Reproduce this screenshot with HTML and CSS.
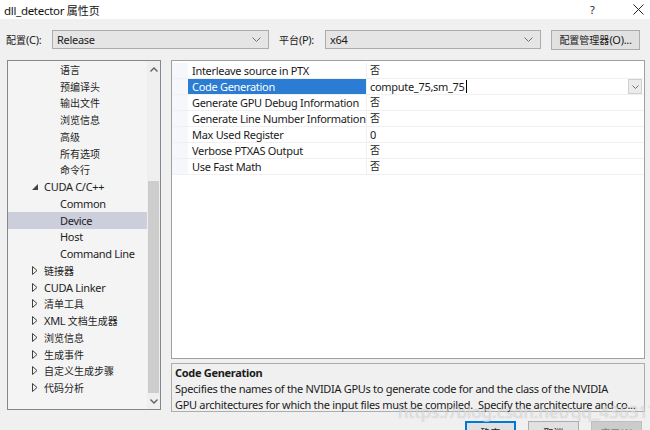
FILE: index.html
```html
<!DOCTYPE html>
<html>
<head>
<meta charset="utf-8">
<link rel="stylesheet" href="styles.css">
</head>
<body>
<div class="window">
  <div class="titlebar">
    <span class="title">dll_detector <span class="zh">属性页</span></span>
    <span class="help">?</span>
    <span class="close"><svg width="11" height="11" viewBox="0 0 11 11"><path d="M0.5 0.5 L10.5 10.5 M10.5 0.5 L0.5 10.5" stroke="#222" stroke-width="1"/></svg></span>
  </div>
  <div class="toolbar">
    <span class="lbl"><span class="zh">配置</span>(C):</span>
    <div class="combo cfg"><span>Release</span><svg class="chev" width="9" height="5" viewBox="0 0 9 5"><path d="M0.5 0.5 L4.5 4.5 L8.5 0.5" fill="none" stroke="#707070"/></svg></div>
    <span class="lbl plat-lbl"><span class="zh">平台</span>(P):</span>
    <div class="combo plat"><span>x64</span><svg class="chev" width="9" height="5" viewBox="0 0 9 5"><path d="M0.5 0.5 L4.5 4.5 L8.5 0.5" fill="none" stroke="#707070"/></svg></div>
    <div class="btn mgr"><span class="zh">配置管理器</span>(O)...</div>
  </div>
  <div class="main">
    <div class="tree">
      <ul class="items">
        <li class="l2 zh">语言</li>
        <li class="l2 zh">预编译头</li>
        <li class="l2 zh">输出文件</li>
        <li class="l2 zh">浏览信息</li>
        <li class="l2 zh">高级</li>
        <li class="l2 zh">所有选项</li>
        <li class="l2 zh">命令行</li>
        <li class="l1"><svg class="tri" width="6" height="6" viewBox="0 0 6 6"><path d="M6 0 L6 6 L0 6 Z" fill="#404040"/></svg>CUDA C/C++</li>
        <li class="l2">Common</li>
        <li class="l2 sel">Device</li>
        <li class="l2">Host</li>
        <li class="l2">Command Line</li>
        <li class="l1 zh"><svg class="tri" width="6" height="9" viewBox="0 0 6 9"><path d="M0.5 0.5 L5 4.5 L0.5 8.5 Z" fill="none" stroke="#404040"/></svg>链接器</li>
        <li class="l1"><svg class="tri" width="6" height="9" viewBox="0 0 6 9"><path d="M0.5 0.5 L5 4.5 L0.5 8.5 Z" fill="none" stroke="#404040"/></svg>CUDA Linker</li>
        <li class="l1 zh"><svg class="tri" width="6" height="9" viewBox="0 0 6 9"><path d="M0.5 0.5 L5 4.5 L0.5 8.5 Z" fill="none" stroke="#404040"/></svg>清单工具</li>
        <li class="l1"><svg class="tri" width="6" height="9" viewBox="0 0 6 9"><path d="M0.5 0.5 L5 4.5 L0.5 8.5 Z" fill="none" stroke="#404040"/></svg>XML&nbsp;<span class="zh">文档生成器</span></li>
        <li class="l1 zh"><svg class="tri" width="6" height="9" viewBox="0 0 6 9"><path d="M0.5 0.5 L5 4.5 L0.5 8.5 Z" fill="none" stroke="#404040"/></svg>浏览信息</li>
        <li class="l1 zh"><svg class="tri" width="6" height="9" viewBox="0 0 6 9"><path d="M0.5 0.5 L5 4.5 L0.5 8.5 Z" fill="none" stroke="#404040"/></svg>生成事件</li>
        <li class="l1 zh"><svg class="tri" width="6" height="9" viewBox="0 0 6 9"><path d="M0.5 0.5 L5 4.5 L0.5 8.5 Z" fill="none" stroke="#404040"/></svg>自定义生成步骤</li>
        <li class="l1 zh"><svg class="tri" width="6" height="9" viewBox="0 0 6 9"><path d="M0.5 0.5 L5 4.5 L0.5 8.5 Z" fill="none" stroke="#404040"/></svg>代码分析</li>
      </ul>
      <div class="vscroll">
        <div class="sarrow"><svg width="8" height="5" viewBox="0 0 8 5"><path d="M0.5 4.5 L4 1 L7.5 4.5" fill="none" stroke="#606060" stroke-width="1.4"/></svg></div>
        <div class="track"><div class="thumb"></div></div>
        <div class="sarrow"><svg width="8" height="5" viewBox="0 0 8 5"><path d="M0.5 0.5 L4 4 L7.5 0.5" fill="none" stroke="#606060" stroke-width="1.4"/></svg></div>
      </div>
    </div>
    <div class="right">
      <div class="grid">
        <div class="row"><span class="gut"></span><span class="name">Interleave source in PTX</span><span class="val zh">否</span></div>
        <div class="row active"><span class="gut"></span><span class="name">Code Generation</span><span class="val">compute_75,sm_75<span class="caret"></span><span class="ddbtn"><svg width="7" height="4" viewBox="0 0 7 4"><path d="M0.5 0.5 L3.5 3.5 L6.5 0.5" fill="none" stroke="#707070"/></svg></span></span></div>
        <div class="row"><span class="gut"></span><span class="name">Generate GPU Debug Information</span><span class="val zh">否</span></div>
        <div class="row"><span class="gut"></span><span class="name">Generate Line Number Information</span><span class="val zh">否</span></div>
        <div class="row"><span class="gut"></span><span class="name">Max Used Register</span><span class="val">0</span></div>
        <div class="row"><span class="gut"></span><span class="name">Verbose PTXAS Output</span><span class="val zh">否</span></div>
        <div class="row"><span class="gut"></span><span class="name">Use Fast Math</span><span class="val zh">否</span></div>
      </div>
      <div class="desc">
        <div class="dtitle">Code Generation</div>
        <div class="dline">Specifies the names of the NVIDIA GPUs to generate code for and the class of the NVIDIA</div>
        <div class="dline">GPU architectures for which the input files must be compiled.&nbsp; Specify the architecture and co...</div>
      </div>
    </div>
  </div>
  <div class="footer">
    <div class="btn ok zh">确定</div>
    <div class="btn zh">取消</div>
    <div class="btn disabled"><span class="zh">应用</span>(A)</div>
  </div>
  <div class="watermark">https://blog.csdn.net/qq_43631789</div>
</div>
</body>
</html>
```
FILE: styles.css
```css
* { box-sizing: border-box; }
html, body { margin: 0; padding: 0; }
body {
  width: 650px;
  height: 430px;
  overflow: hidden;
  background: #f0f0f0;
  font-family: "Noto Sans", "Noto Sans CJK SC", sans-serif;
  font-size: 11px;
  letter-spacing: -0.3px;
  color: #1b1b1b;
}
.zh { font-size: 10px; letter-spacing: 0; }
.window { position: relative; width: 650px; height: 430px; }
.titlebar {
  height: 19px;
  background: #fff;
  display: flex;
  align-items: center;
  padding-left: 4px;
}
.title { flex: 1; color: #111; font-size: 11.5px; }
.title .zh { font-size: 11px; }
.help { width: 43px; color: #222; }
.close { width: 17px; display: flex; align-items: center; }
.toolbar {
  height: 41px;
  display: flex;
  align-items: center;
  padding-left: 6px;
}
.lbl { width: 46px; white-space: nowrap; }
.plat-lbl { margin-left: 10px; }
.combo {
  height: 19px;
  border: 1px solid #acacac;
  background: #e5e5e5;
  display: flex;
  align-items: center;
  justify-content: space-between;
  padding: 0 7px 0 4px;
}
.combo.cfg { width: 217px; }
.combo.plat { width: 216px; }
.btn {
  height: 21px;
  border: 1px solid #adadad;
  background: #e1e1e1;
  display: flex;
  align-items: center;
  justify-content: center;
  white-space: nowrap;
}
.btn.mgr { width: 89px; margin-left: 10px; height: 20px; }
.main {
  display: flex;
  padding-left: 7px;
  gap: 10px;
}
.tree {
  width: 154px;
  height: 350px;
  border: 1px solid #828790;
  background: #f4f4f4;
  display: flex;
}
.items {
  list-style: none;
  margin: 0;
  padding: 0;
  width: 139px;
}
.items li {
  height: 16.75px;
  display: flex;
  align-items: center;
  white-space: nowrap;
  color: #1e1e1e;
}
.items li.l2 { padding-left: 52px; }
.items li.l1 { padding-left: 24px; }
.items li.sel { background: #cccedb; }
.tri { margin-right: 6px; flex: none; }
.vscroll {
  width: 13px;
  background: #efefef;
  display: flex;
  flex-direction: column;
}
.sarrow { height: 16px; display: flex; align-items: center; justify-content: center; }
.track { flex: 1; display: flex; flex-direction: column; padding-top: 104px; }
.thumb { flex: 1; background: #cdcdcd; margin-left: 1px; margin-right: 1px; }
.right {
  display: flex;
  flex-direction: column;
  gap: 4px;
}
.grid {
  width: 474px;
  height: 299px;
  border: 1px solid #a0a0a0;
  background: #fff;
  padding-top: 2px;
}
.row {
  height: 16px;
  display: flex;
  border-bottom: 1px solid #f0f0f0;
}
.gut { width: 16px; background: #f5f7fb; }
.name {
  width: 179px;
  padding-left: 4px;
  border-right: 1px solid #f0f0f0;
  white-space: nowrap;
  overflow: hidden;
  line-height: 15px;
}
.val {
  flex: 1;
  padding-left: 3px;
  line-height: 15px;
  display: flex;
  align-items: center;
  position: relative;
}
.row.active .name { background: #2b7cd3; color: #fff; }
.caret { width: 1px; height: 13px; background: #000; margin-left: 1px; }
.ddbtn {
  position: absolute;
  right: 2px;
  top: 0;
  width: 14px;
  height: 15px;
  border: 1px solid #d0d0d0;
  background: #ececec;
  display: flex;
  align-items: center;
  justify-content: center;
}
.desc {
  width: 474px;
  height: 49px;
  border: 1px solid #adadad;
  padding: 1px 3px 0 3px;
  line-height: 16px;
}
.dtitle { font-weight: bold; }
.dline { white-space: nowrap; overflow: hidden; }
.footer {
  display: flex;
  justify-content: flex-end;
  gap: 12px;
  padding-right: 8px;
  margin-top: 9px;
}
.footer .btn { width: 51px; height: 23px; }
.footer .btn.ok { border: 2px solid #0078d7; }
.footer .btn.disabled { background: #cccccc; border-color: #bfbfbf; color: #838383; }
.watermark {
  position: absolute;
  left: 398px;
  top: 400px;
  font-size: 17px;
  letter-spacing: 0;
  color: rgba(255, 255, 255, 0.5);
  text-shadow: 0 0 1px rgba(130, 130, 130, 0.5);
  white-space: nowrap;
  pointer-events: none;
}
```
